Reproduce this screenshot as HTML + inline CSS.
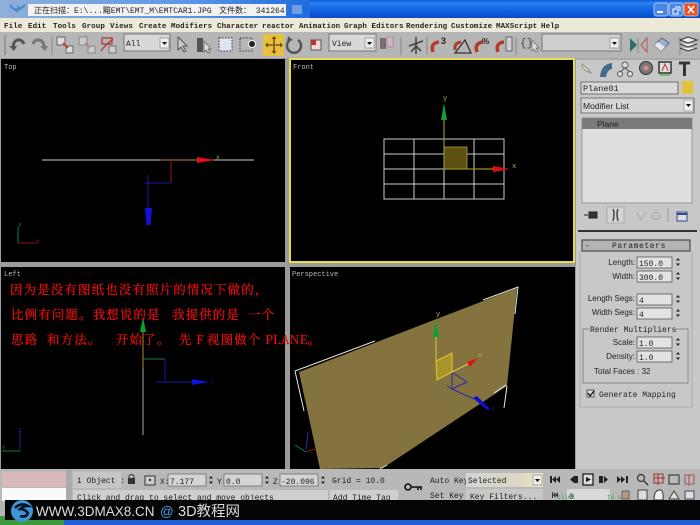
<!DOCTYPE html>
<html><head><meta charset="utf-8"><style>
html,body{margin:0;padding:0;background:#b4b4b4;overflow:hidden}
svg{display:block;width:700px;height:525px;filter:blur(.35px)}
.m{font:7.5px "Liberation Mono",monospace;fill:#222;font-weight:bold;letter-spacing:.08px}
.t{font:8px "Liberation Mono",monospace;fill:#222}
.s{font:8px "Liberation Sans",sans-serif;fill:#222}
.l{font:8px "Liberation Sans",sans-serif;fill:#222;text-anchor:end}
.v{font:7px "Liberation Mono",monospace;fill:#bbb}
.r{font:12.5px "Noto Serif CJK SC","Liberation Serif",serif;fill:#f01010;stroke:#e80c0c;stroke-width:.25px;letter-spacing:1.1px}
</style></head><body>
<svg xmlns="http://www.w3.org/2000/svg" viewBox="0 0 700 525">
<defs>
<linearGradient id="tb" x1="0" y1="0" x2="0" y2="1"><stop offset="0" stop-color="#0a5ad8"/><stop offset=".15" stop-color="#2a80ee"/><stop offset=".6" stop-color="#0d62e0"/><stop offset="1" stop-color="#0a4cc4"/></linearGradient>
<linearGradient id="lb" x1="0" y1="0" x2="1" y2="0"><stop offset="0" stop-color="#8fb0d8"/><stop offset=".6" stop-color="#5b97e6"/><stop offset="1" stop-color="#1f6be0"/></linearGradient>
<linearGradient id="sel" x1="0" y1="0" x2="1" y2="0"><stop offset="0" stop-color="#d4d4d4"/><stop offset=".7" stop-color="#dcd8c4"/><stop offset="1" stop-color="#efe6c0"/></linearGradient>
</defs>
<rect width="700" height="525" fill="#b4b4b4"/>
<!-- title bar -->
<rect width="700" height="18" fill="url(#tb)"/>
<rect x="0" y="0" width="310" height="18" fill="url(#lb)"/>
<path d="M10 5q6 8 11 3q3-2 4-3M16 12l3-6" stroke="#4a86c8" stroke-width="2" fill="none"/>
<rect x="28" y="4" width="258" height="12" fill="#f2f2f2"/>
<text x="34" y="13" font-family="'Liberation Mono','Noto Sans CJK SC',monospace" font-size="8" fill="#222">正在扫描：E:\...黯EMT\EMT_M\EMTCAR1.JPG</text>
<text x="219" y="13" font-family="'Liberation Mono','Noto Sans CJK SC',monospace" font-size="8" fill="#222">文件数： 341264</text>
<rect x="292" y="5" width="10" height="9" fill="#6f9fe0"/>
<rect x="654" y="3" width="14" height="13" rx="2" fill="#4a86e8" stroke="#cfe0f8" stroke-width=".7"/><rect x="657" y="11" width="6" height="2" fill="#fff"/>
<rect x="669" y="3" width="14" height="13" rx="2" fill="#4a86e8" stroke="#cfe0f8" stroke-width=".7"/><path d="M673 9h5v5h-5zM675 7h5v4" fill="none" stroke="#fff"/>
<rect x="684" y="3" width="14" height="13" rx="2" fill="#e0582a" stroke="#f0d0c0" stroke-width=".7"/><path d="M688 6l6 7M694 6l-6 7" stroke="#fff" stroke-width="1.6"/>
<!-- menu -->
<rect y="18" width="700" height="14" fill="#ece9d8"/>
<g class="m">
<text x="4" y="28">File</text><text x="28" y="28">Edit</text><text x="53" y="28">Tools</text><text x="82" y="28">Group</text><text x="110" y="28">Views</text><text x="139" y="28">Create</text><text x="171" y="28">Modifiers</text><text x="217" y="28">Character</text><text x="262" y="28">reactor</text><text x="299" y="28">Animation</text><text x="344" y="28">Graph Editors</text><text x="406" y="28">Rendering</text><text x="451" y="28">Customize</text><text x="496" y="28">MAXScript</text><text x="541" y="28">Help</text>
</g>
<!-- toolbar -->
<rect y="32" width="700" height="26" fill="#b6b6b6"/>
<path d="M5 35v20" stroke="#777"/>
<path d="M13 47q1-8 7-7q3 1 4 4" stroke="#555" stroke-width="3" fill="none"/><path d="M9 46l8 0-3 5z" fill="#555"/>
<path d="M33 44q2-5 6-4q5 1 5 7" stroke="#777" stroke-width="3" fill="none"/><path d="M40 46l8 0-3 5z" fill="#777"/>
<path d="M52 37v18" stroke="#888"/>
<rect x="57" y="37" width="8" height="8" fill="#ddd" stroke="#666"/><rect x="66" y="46" width="7" height="7" fill="#ddd" stroke="#666"/><path d="M63 43l5 5" stroke="#c33" stroke-width="1.6"/>
<rect x="79" y="37" width="8" height="8" fill="#ccc" stroke="#888"/><rect x="88" y="46" width="7" height="7" fill="#ccc" stroke="#888"/><path d="M85 43l5 5" stroke="#c77" stroke-width="1.4" stroke-dasharray="2 1"/>
<path d="M102 38h10v6h-10zM101 51q4-6 12-12" fill="none" stroke="#a33" stroke-width="1.2"/><rect x="109" y="46" width="7" height="7" fill="#ccc" stroke="#777"/>
<rect x="124" y="34" width="46" height="17" fill="#d8d8d8" stroke="#777"/><text x="126" y="46" class="t">All</text>
<rect x="160" y="38" width="9" height="10" fill="#eee" stroke="#666" stroke-width=".5"/><path d="M162 42h5l-2.500 3z" fill="#111"/>
<path d="M178 37l0 13l3-3l3 5l2-1l-3-5l4 0z" fill="#ccc" stroke="#555"/>
<path d="M197 38h6v14h-6z" fill="#555"/><path d="M204 41l0 11l2-2l2 3l2-1l-2-3l3 0z" fill="#ddd" stroke="#555" stroke-width=".7"/>
<rect x="219" y="38" width="13" height="13" fill="#dfe4f4" stroke="#333" stroke-dasharray="1.500 1.500"/>
<rect x="240" y="38" width="12" height="13" fill="none" stroke="#333" stroke-dasharray="1.500 1.500"/><circle cx="252" cy="44" r="3.500" fill="#222" stroke="#eee"/>
<rect x="263" y="34" width="21" height="22" fill="#e8c040"/><path d="M274 37v15M266 45h15" stroke="#7a5a10" stroke-width="1.600"/><path d="M274 36l-2.500 3h5zM274 54l-2.500-3h5zM265 45l3-2.500v5zM283 45l-3-2.500v5z" fill="#6a4a10"/>
<path d="M290 40a7 7 0 1 0 8 0" fill="none" stroke="#555" stroke-width="2.500"/><path d="M288 36l5 4-6 2z" fill="#555"/>
<rect x="311" y="40" width="10" height="10" fill="#f0d8d8" stroke="#555"/><rect x="311" y="40" width="5" height="5" fill="#b33"/>
<rect x="329" y="34" width="47" height="17" fill="#d8d8d8" stroke="#777"/><text x="332" y="46" class="t">View</text>
<rect x="365" y="38" width="9" height="10" fill="#eee" stroke="#666" stroke-width=".5"/><path d="M367 42h5l-2.500 3z" fill="#111"/>
<path d="M380 38h6v11h-6z" fill="#7a6a7a"/><path d="M387 37h6v10h-6z" fill="#d8b0c8" stroke="#777" stroke-width=".5"/>
<path d="M401 37v18M427 37v18" stroke="#888"/>
<path d="M416 37v17M409 46l14-5M411 52l5-6 5 5" stroke="#444" stroke-width="1.600" fill="none"/>
<path d="M433 52q-3-9 6-10" stroke="#b43a2a" stroke-width="3.500" fill="none"/><text x="441" y="44" font-size="9" font-weight="bold" font-family="Liberation Sans" fill="#222">3</text>
<path d="M455 53l10-13 6 13z" fill="none" stroke="#333" stroke-width="1.300"/><path d="M455 50q-1-7 6-8" stroke="#b43a2a" stroke-width="3" fill="none"/>
<path d="M477 52q-3-9 6-10" stroke="#b43a2a" stroke-width="3.500" fill="none"/><text x="482" y="44" font-size="8" font-weight="bold" font-family="Liberation Sans" fill="#222">%</text>
<path d="M498 52q-3-9 6-10" stroke="#b43a2a" stroke-width="3.500" fill="none"/><rect x="506" y="37" width="6" height="14" fill="#ccc" stroke="#444" stroke-width=".7"/>
<path d="M516 37v18" stroke="#888"/>
<text x="520" y="46" font-family="Liberation Mono" font-size="11" fill="#444">{}</text><path d="M532 40v11l2-2 2 3 2-1-2-3h3z" fill="#ddd" stroke="#666" stroke-width=".7"/>
<rect x="542" y="34" width="79" height="17" fill="#cfcfcf" stroke="#777"/>
<rect x="610" y="38" width="9" height="10" fill="#eee" stroke="#666" stroke-width=".5"/><path d="M612 42h5l-2.500 3z" fill="#111"/>
<path d="M630 38l7 7-7 7z" fill="#2f6f6a"/><path d="M638 38v15" stroke="#888"/><path d="M641 45l6-7v14z" fill="none" stroke="#b55"/>
<path d="M654 45l8-7 7 5-8 8z" fill="#9ab0d8" stroke="#667"/><path d="M654 45l4-3 7 5-4 4z" fill="#e8e8f0"/>
<path d="M680 37v18" stroke="#888"/>
<path d="M680 40l8-3 9 3-9 3zM680 44l8 3 9-3M680 48l8 3 9-3" fill="#eee" stroke="#333"/>
<!-- viewports -->
<rect y="58" width="700" height="412" fill="#9c9c9c"/>
<rect x="1" y="59" width="284" height="203" fill="#000"/>
<rect x="290" y="59" width="284" height="203" fill="#000" stroke="#e6dc50" stroke-width="2"/>
<rect x="1" y="267" width="284" height="202" fill="#000"/>
<rect x="290" y="267" width="285" height="202" fill="#000"/>
<text x="4" y="69" class="v">Top</text><text x="293" y="69" class="v">Front</text><text x="4" y="276" class="v">Left</text><text x="292" y="276" class="v">Perspective</text>
<!-- Top -->
<path d="M42 160H254" stroke="#ccc" stroke-width="1"/>
<path d="M160 160H200" stroke="#a89030"/>
<path d="M171 160v23" stroke="#901818"/><path d="M145 183h26" stroke="#16169a"/><path d="M148 175v36" stroke="#1818a0"/>
<path d="M145 208h7l-1.500 17h-4z" fill="#1010e0"/>
<path d="M197 157l18 3-18 3z" fill="#e01010"/>
<text x="216" y="159" font-size="6" font-family="Liberation Mono" fill="#c0b040">x</text>
<path d="M18 227v16" stroke="#1a7a5a"/><path d="M18 243h19" stroke="#8a1020"/><text x="18" y="226" font-size="6" font-family="Liberation Mono" fill="#2a7a5a">y</text><text x="36" y="243" font-size="6" font-family="Liberation Mono" fill="#8a2030">x</text>
<!-- Front -->
<path d="M384 139h120v60H384zM384 154h120M384 169h120M384 184h120M414 139v60M444 139v60M474 139v60" fill="none" stroke="#ccc" stroke-width="1"/>
<rect x="444" y="147" width="23" height="22" fill="#5d5013" stroke="#b0a030" stroke-width=".8"/>
<path d="M444 120v49M444 169h50" stroke="#9c8c28" stroke-width="1.200"/>
<path d="M441 120l3-17 3 17z" fill="#10a030"/>
<path d="M493 166l17 3-17 3z" fill="#e01010"/>
<text x="443" y="100" font-size="7" font-family="Liberation Mono" fill="#c0b040">y</text><text x="512" y="168" font-size="7" font-family="Liberation Mono" fill="#c0b040">x</text>
<!-- Left -->
<path d="M143 368V435" stroke="#aaa" stroke-width="1"/><path d="M143 368v-36" stroke="#b08c20"/>
<path d="M140 332l3-15 3 15z" fill="#10a030"/>
<path d="M143 359h22" stroke="#1a8030"/><path d="M165 359v23" stroke="#1818a0"/><path d="M156 382h40" stroke="#1818a0"/>
<path d="M192 379l17 3-17 3z" fill="#1010e0"/><text x="210" y="383" font-size="6" font-family="Liberation Mono" fill="#181890">z</text>
<path d="M20 431v20" stroke="#20208a"/><path d="M2 451h18" stroke="#1a7a3a"/><text x="2" y="450" font-size="6" font-family="Liberation Mono" fill="#1a7a3a">Y</text><text x="18" y="432" font-size="6" font-family="Liberation Mono" fill="#20208a">z</text>
<!-- Perspective -->
<path d="M299 372L517 288L507 386L383 468L320 469Z" fill="#84733e"/>
<path d="M295 371L375 341M483 300L518 287L515 314M295 371l9 40M507 386l-3 22M506 385l-12 8M387 465l-7 4" fill="none" stroke="#e6e6e6" stroke-width="1"/>
<path d="M436 361L452 353V372L437 380Z" fill="#a89428" stroke="#e0c830" stroke-width="1"/>
<path d="M436 337V361M452 372L468 364" stroke="#d8c840" stroke-width="1"/>
<path d="M433 337l3-17 3 17z" fill="#10a030"/><path d="M467 362l11-4-8 9z" fill="#e01010"/>
<path d="M452 373v16M447 386l5 3M452 389l22 10M453 373l14 9-15 7" fill="none" stroke="#2828a8"/>
<path d="M473 398l4-2 13 13-3 1z" fill="#1010d0"/>
<text x="436" y="316" font-size="7" font-family="Liberation Mono" fill="#c0b040">y</text><text x="478" y="357" font-size="7" font-family="Liberation Mono" fill="#c0b040">x</text><text x="491" y="410" font-size="6" font-family="Liberation Mono" fill="#2020a0">z</text>
<path d="M308 432l-2 18" stroke="#2a2aa0" fill="none"/><path d="M295 445l11 7" stroke="#1a7a3a" fill="none"/><path d="M306 452l9-3" stroke="#8a1020" fill="none"/>
<!-- Text -->
<text x="10" y="294" class="r">因为是没有图纸也没有照片的情况下做的，</text>
<text x="11" y="319" class="r">比例有问题。我想说的是</text>
<text x="172" y="319" class="r">我提供的是</text>
<text x="248" y="319" class="r">一个</text>
<g class="r"><text x="11" y="344">思路</text><text x="47" y="344">和方法。</text><text x="116" y="344">开始了。</text><text x="179" y="344">先</text><text x="196" y="344">F</text><text x="207" y="344">视图做个</text><text x="265" y="344" letter-spacing="0">PLANE。</text></g>
<!-- right panel -->
<rect x="576" y="58" width="124" height="412" fill="#c8c8c8"/>
<rect x="576" y="58" width="124" height="2" fill="#aaa"/>
<path d="M582 64l6 5 3 4-5-2-4-4z" fill="#d8d8b0" stroke="#777" stroke-width=".7"/>
<path d="M600 77q1-13 12-14v6q-5 1-6 8z" fill="#456a90"/>
<circle cx="625" cy="65" r="3" fill="#ddd" stroke="#555"/><circle cx="620" cy="74" r="2.500" fill="#ddd" stroke="#555"/><circle cx="630" cy="74" r="2.500" fill="#ddd" stroke="#555"/><path d="M625 68l-5 4M625 68l5 4" stroke="#555"/>
<circle cx="646" cy="68" r="6.500" fill="#777" stroke="#333"/><circle cx="646" cy="68" r="2.500" fill="#d88"/>
<rect x="659" y="62" width="12" height="11" fill="#ddd" stroke="#333" stroke-width="1.500"/><path d="M662 71l3-7 3 7" fill="none" stroke="#c33"/><path d="M660 75h10" stroke="#2a2"/>
<path d="M679 63h11M684.500 63v13" stroke="#333" stroke-width="3"/>
<rect x="581" y="82" width="97" height="12" fill="#d8d8d8" stroke="#555" stroke-width=".8"/>
<text x="583" y="91" font-family="Liberation Mono" font-size="8.500" fill="#222">Plane01</text>
<rect x="682" y="81" width="11" height="13" fill="#e3c040"/>
<rect x="581" y="98" width="113" height="15" fill="#d6d6d6" stroke="#777"/>
<text x="583" y="109" font-family="Liberation Sans" font-size="8.500" fill="#222">Modifier List</text>
<rect x="684" y="100" width="9" height="11" fill="#eee" stroke="#777" stroke-width=".5"/><path d="M686 104h5l-2.500 3z" fill="#111"/>
<rect x="582" y="118" width="110" height="85" fill="#dedede" stroke="#999"/>
<rect x="582" y="118" width="110" height="11" fill="#7a7a7a"/>
<text x="597" y="127" font-family="Liberation Sans" font-size="8.500" fill="#222">Plane</text>
<path d="M589 212h8v6h-8zM588 215h-4" fill="#333" stroke="#222"/>
<rect x="607" y="207" width="17" height="16" fill="#d4d4d4" stroke="#aaa"/>
<path d="M613 209q2 4 0 12M618 209q-2 4 0 12" stroke="#444" stroke-width="1.500" fill="none"/>
<path d="M637 212l4 8 5-8" stroke="#aaa" fill="none"/><circle cx="656" cy="216" r="3.500" fill="none" stroke="#aaa"/>
<path d="M668 208v14" stroke="#999"/>
<rect x="677" y="212" width="10" height="9" fill="#ddd" stroke="#2a4a90"/><path d="M677 214h10" stroke="#2a4a90" stroke-width="2"/>
<rect x="578" y="230" width="119" height="2" fill="#333"/>
<!-- Parameters -->
<path d="M580 251V407H692V251" stroke="#aaa" fill="none"/>
<rect x="582" y="240" width="108" height="11" fill="#b4b4b4" stroke="#333"/>
<text x="585" y="248" class="t">-</text><text x="612" y="248" class="t" letter-spacing=".6">Parameters</text>
<text x="635" y="265" class="l">Length:</text><rect x="637" y="257" width="35" height="11" fill="#e2e2e2" stroke="#444" stroke-width=".7"/><text x="639" y="266" class="t">150.0</text>
<text x="635" y="279" class="l">Width:</text><rect x="637" y="271" width="35" height="11" fill="#e2e2e2" stroke="#444" stroke-width=".7"/><text x="639" y="280" class="t">300.0</text>
<text x="635" y="301" class="l">Length Segs:</text><rect x="637" y="294" width="35" height="11" fill="#e2e2e2" stroke="#444" stroke-width=".7"/><text x="639" y="303" class="t">4</text>
<text x="635" y="315" class="l">Width Segs:</text><rect x="637" y="308" width="35" height="11" fill="#e2e2e2" stroke="#444" stroke-width=".7"/><text x="639" y="317" class="t">4</text>
<rect x="583" y="329" width="105" height="54" fill="none" stroke="#888"/>
<rect x="589" y="325" width="87" height="8" fill="#c8c8c8"/>
<text x="590" y="332" class="t">Render Multipliers</text>
<text x="635" y="345" class="l">Scale:</text><rect x="637" y="337" width="35" height="11" fill="#e2e2e2" stroke="#444" stroke-width=".7"/><text x="639" y="346" class="t">1.0</text>
<text x="635" y="359" class="l">Density:</text><rect x="637" y="351" width="35" height="11" fill="#e2e2e2" stroke="#444" stroke-width=".7"/><text x="639" y="360" class="t">1.0</text>
<text x="594" y="374" class="s">Total Faces : 32</text>
<g fill="#222"><path d="M678 258l2 2.500h-4zM678 266l2-2.500h-4zM678 272l2 2.500h-4zM678 280l2-2.500h-4zM678 295l2 2.500h-4zM678 303l2-2.500h-4zM678 309l2 2.500h-4zM678 317l2-2.500h-4zM678 338l2 2.500h-4zM678 346l2-2.500h-4zM678 352l2 2.500h-4zM678 360l2-2.500h-4z"/></g>
<rect x="587" y="390" width="7" height="7" fill="#ddd" stroke="#555"/><path d="M588 393l2 3 4-5" stroke="#111" stroke-width="1.300" fill="none"/>
<text x="599" y="397" class="t">Generate Mapping</text>
<!-- bottom -->
<rect y="469" width="700" height="32" fill="#b8b8b8"/>
<rect x="2" y="472" width="64" height="15" fill="#d8b8b8"/>
<rect x="2" y="488" width="64" height="13" fill="#fafafa"/>
<rect x="66" y="470" width="6" height="31" fill="#aaa"/>
<rect x="73" y="472" width="48" height="16" fill="#c6c6c6"/>
<text x="77" y="483" class="t">1 Object :</text>
<rect x="128" y="478" width="7" height="6" fill="#333"/><path d="M129 478v-2q2.500-3 5 0v2" stroke="#333" fill="none"/>
<rect x="145" y="476" width="10" height="9" fill="#ccc" stroke="#333"/><circle cx="150" cy="480" r="1.200" fill="#333"/>
<text x="160" y="484" class="t">X:</text><rect x="168" y="474" width="38" height="12" fill="#d4d4d4" stroke="#555" stroke-width=".6"/><text x="170" y="484" class="t">7.177</text>
<text x="217" y="484" class="t">Y:</text><rect x="224" y="474" width="38" height="12" fill="#d4d4d4" stroke="#555" stroke-width=".6"/><text x="226" y="484" class="t">0.0</text>
<text x="273" y="484" class="t">Z:</text><rect x="280" y="474" width="38" height="12" fill="#d4d4d4" stroke="#555" stroke-width=".6"/><text x="281" y="484" class="t">-20.096</text>
<g fill="#222"><path d="M211 476l2 2.500h-4zM211 484l2-2.500h-4zM267 476l2 2.500h-4zM267 484l2-2.500h-4zM323 476l2 2.500h-4zM323 484l2-2.500h-4z"/></g>
<text x="332" y="483" class="t">Grid = 10.0</text>
<rect x="73" y="490" width="255" height="11" fill="#cfcfcf"/>
<text x="77" y="500" class="t">Click and drag to select and move objects</text>
<rect x="330" y="490" width="68" height="11" fill="#cfcfcf"/>
<text x="333" y="500" class="t">Add Time Tag</text>
<circle cx="408" cy="487" r="3" fill="none" stroke="#111" stroke-width="1.600"/><path d="M411 487h11M418 487v3M421 487v3" stroke="#111" stroke-width="1.600"/>
<text x="430" y="483" class="t">Auto Key</text><text x="430" y="498" class="t">Set Key</text>
<rect x="466" y="473" width="77" height="14" fill="url(#sel)"/>
<text x="468" y="483" class="t">Selected</text>
<rect x="533" y="475" width="9" height="10" fill="#eee" stroke="#666" stroke-width=".5"/><path d="M535 479h5l-2.500 3z" fill="#111"/>
<rect x="466" y="489" width="77" height="12" fill="#c8c8c8"/><text x="470" y="499" class="t">Key Filters...</text>
<g fill="#222"><path d="M550 476h2v7h-2zM552 479.500l4-3.500v7zM556 479.500l4-3.500v7zM570 479.500l4-3.500v7zM574 476h4v7h-4zM599 476h4v7h-4zM604 476l4 3.500-4 3.500zM617 476l4 3.500-4 3.500zM621 476l4 3.500-4 3.500zM626 476h2v7h-2z"/></g>
<rect x="583" y="474" width="10" height="11" fill="#ddd" stroke="#111" stroke-width="1.200"/><path d="M586 477l5 2.500-5 2.500z" fill="#111"/>
<path d="M552 492h1v6h-1zM553 495l2.500-3v6zM555.500 495l2.500-3v6z" fill="#333"/>
<rect x="567" y="489" width="43" height="12" fill="#d8d8d8"/><text x="569" y="499" class="t">0</text>
<text x="557" y="499" font-size="6" font-family="Liberation Mono" fill="#3a9a5a">click</text>
<text x="607" y="499" font-size="6" font-family="Liberation Mono" fill="#3a9a5a">to see</text>
<rect x="622" y="491" width="7" height="8" fill="#b89a88" stroke="#444" stroke-width=".7"/>
<circle cx="641" cy="478" r="3.500" fill="none" stroke="#333" stroke-width="1.200"/><path d="M644 481l4 4" stroke="#333" stroke-width="1.400"/>
<path d="M654 474h9v9h-9zM658 474v11M654 478h11" fill="none" stroke="#a33" stroke-width="1.100"/>
<path d="M669 475h10v9h-10z" fill="none" stroke="#555" stroke-width="1.400"/>
<path d="M685 475h9v9h-9zM689 475v11" fill="none" stroke="#a55" stroke-width="1.100"/>
<rect x="638" y="490" width="9" height="10" fill="#ddd" stroke="#444"/><path d="M654 500q0-9 5-10t4 10z" fill="#eee" stroke="#333"/><path d="M669 499l5-8 5 8z" fill="#ddd" stroke="#444"/><rect x="685" y="491" width="9" height="8" fill="#ddd" stroke="#446"/>
<!-- footer -->
<rect y="520" width="700" height="5" fill="#1f5fdc"/>
<rect y="516" width="64" height="9" fill="#3c9a3c"/>
<rect x="5" y="500" width="695" height="20" fill="#050505"/>
<circle cx="22" cy="511" r="11" fill="#3c96d8"/><path d="M15 508q6-6 13-2q-5 0-8 3q5 0 8 4q-2 5-8 3" fill="none" stroke="#06121f" stroke-width="2.500"/>
<text x="36" y="516" font-family="'Liberation Sans',sans-serif" font-size="13.500" fill="#dcdcdc">WWW.3DMAX8.CN</text>
<text x="160" y="516" font-family="'Liberation Sans',sans-serif" font-size="13.500" fill="#4aa0e8">@</text>
<text x="178" y="516" font-family="'Liberation Sans','Noto Sans CJK SC',sans-serif" font-size="14.500" fill="#dcdcdc">3D教程网</text>
</svg>
</body></html>
